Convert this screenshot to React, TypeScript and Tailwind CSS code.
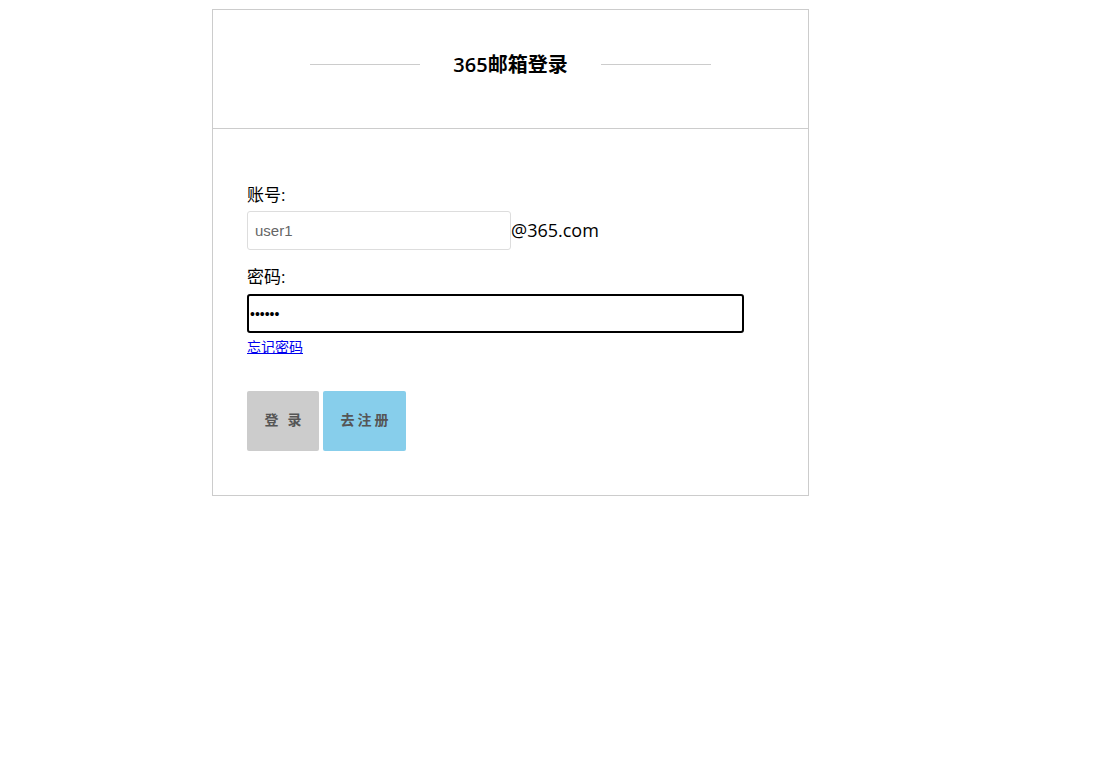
export default function App() {
  return (
    <div className="min-h-[757px] bg-white pt-[9px] font-['Open_Sans','Noto_Sans_CJK_SC',sans-serif] text-black">
      <div className="ml-[212px] w-[597px] border border-[#cccccc]">
        <div className="flex h-[119px] items-center justify-center border-b border-[#cccccc] pb-[9px]">
          <div className="h-px w-[110px] bg-[#cccccc]" />
          <h1 className="mx-[33px] text-[20px] font-semibold">365邮箱登录</h1>
          <div className="h-px w-[110px] bg-[#cccccc]" />
        </div>
        <form className="px-[34px] pt-[54px] pb-[44px]">
          <label className="block text-[17px] leading-[24px]">账号:</label>
          <div className="mt-[4px] flex items-center">
            <input
              type="text"
              defaultValue="user1"
              className="h-[39px] w-[264px] rounded-[3px] border border-[#dddddd] px-[7px] font-['Liberation_Sans',sans-serif] text-[15px] text-[#666666] outline-none"
            />
            <span className="text-[18px]">@365.com</span>
          </div>
          <label className="mt-[15px] block text-[17px] leading-[24px]">密码:</label>
          <input
            type="password"
            defaultValue="123456"
            className="mt-[5px] block h-[39px] w-[497px] rounded-[3px] border-2 border-black px-[1px] font-['Liberation_Sans',sans-serif] text-[14px] outline-none"
          />
          <a href="#" className="block text-[14px] leading-[28px] text-[#0000ee] underline">
            忘记密码
          </a>
          <div className="mt-[30px] flex gap-[4px]">
            <button
              type="button"
              className="h-[60px] w-[72px] rounded-[2px] bg-[#cccccc] pb-[3px] text-[14px] font-bold tracking-[9px] text-[#555555]"
            >
              <span className="ml-[9px]">登录</span>
            </button>
            <button
              type="button"
              className="h-[60px] w-[83px] rounded-[2px] bg-[#87ceeb] pb-[3px] text-[14px] font-bold tracking-[3px] text-[#555555]"
            >
              <span className="ml-[3px]">去注册</span>
            </button>
          </div>
        </form>
      </div>
    </div>
  );
}
